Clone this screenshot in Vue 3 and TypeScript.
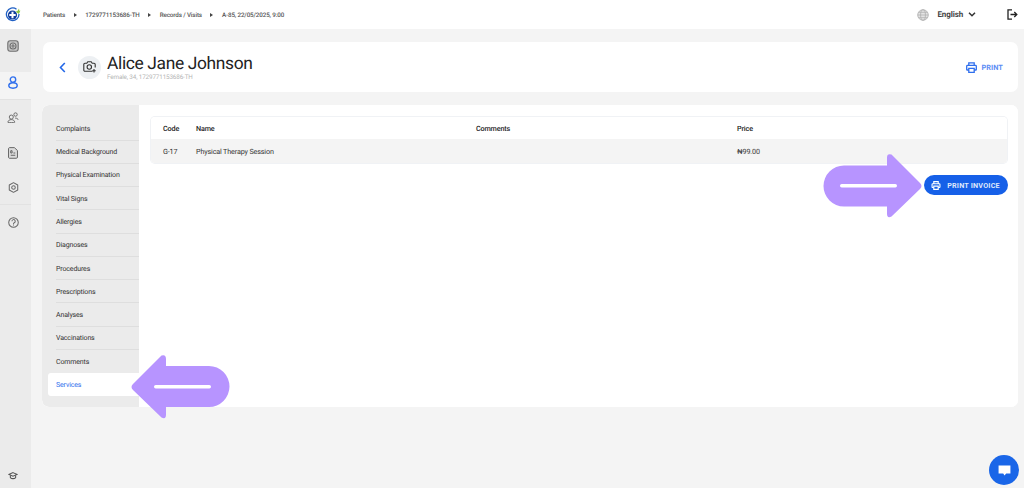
<script setup lang="ts">
const crumbs: string[] = ['Patients', '1729771153686-TH', 'Records / Visits', 'A-85, 22/05/2025, 9:00']
const menu: string[] = ['Complaints', 'Medical Background', 'Physical Examination', 'Vital Signs', 'Allergies', 'Diagnoses', 'Procedures', 'Prescriptions', 'Analyses', 'Vaccinations', 'Comments', 'Services']
</script>

<template>
  <div class="page">
    <header class="topbar">
      <svg class="logo" width="16" height="16" viewBox="0 0 16 16">
        <path d="M11.500 2.200A6.300 6.300 0 1 0 14 7" fill="none" stroke="#1f5fc4" stroke-width="1.300" />
        <circle cx="7.500" cy="8" r="4.600" fill="#123f9c" />
        <path d="M6.500 4.800h2v2.200h2.200v2H8.500v2.200h-2V9H4.300V7h2.200z" fill="#fff" />
        <path d="M11 5l1-1.500.4.800L14 1.500l.4 2.500 1-.5-1.500 3.500z" fill="#8cc63f" />
      </svg>
      <nav class="crumbs">
        <template v-for="(c, i) in crumbs" :key="c">
          <span>{{ c }}</span>
          <svg v-if="i < crumbs.length - 1" class="sep" width="3" height="4" viewBox="0 0 3 4"><path d="M0 0 3 2 0 4z" fill="#444" /></svg>
        </template>
      </nav>
      <div class="top-right">
        <svg width="12" height="12" viewBox="0 0 12 12" fill="none" stroke="#b0b0b0" stroke-width=".8">
          <circle cx="6" cy="6" r="5.300" fill="#e4e4e4" />
          <ellipse cx="6" cy="6" rx="2.400" ry="5.300" />
          <path d="M.7 6h10.600M1.500 3.300h9M1.500 8.700h9" />
        </svg>
        <span class="lang">English</span>
        <svg class="chev" width="8" height="5" viewBox="0 0 8 5" fill="none" stroke="#333" stroke-width="1.500"><path d="M1 .8 4 3.800 7 .8" /></svg>
        <svg class="logout" width="11" height="11" viewBox="0 0 11 11" fill="none" stroke="#222" stroke-width="1.300">
          <path d="M5 .9H1v9.200h4" />
          <path d="M3.500 5.500h6M7.300 3 9.800 5.500 7.300 8" />
        </svg>
      </div>
    </header>

    <div class="body">
      <aside class="rail">
        <div class="rail-top">
          <div class="rail-item r1">
            <svg width="12" height="12" viewBox="0 0 12 12" fill="none" stroke="#707070" stroke-width="1.100">
              <rect x=".8" y=".8" width="10.400" height="10.400" rx="2.400" fill="#c4c4c4" />
              <circle cx="6" cy="6" r="3" fill="#d8d8d8" />
              <circle cx="6" cy="6" r="1.100" />
            </svg>
          </div>
          <div class="rail-item active">
            <svg width="10" height="13" viewBox="0 0 10 13" fill="none" stroke="#2f6fed" stroke-width="1.400">
              <circle cx="5" cy="3.600" r="2.700" />
              <path d="M5 6.800c-2.500 0-4.200 1.300-4.200 2.800 0 1.500 1.700 2.600 4.200 2.600s4.200-1.100 4.200-2.600c0-1.500-1.700-2.800-4.200-2.800z" />
            </svg>
          </div>
          <div class="rail-item r3">
            <svg width="12" height="11" viewBox="0 0 14 13" fill="none" stroke="#666" stroke-width="1.100">
              <circle cx="5" cy="6" r="2.400" />
              <path d="M1 12.200c0-2 1.700-3.200 4-3.200s4 1.200 4 3.200c-1.200.5-6.800.5-8 0z" />
              <circle cx="10" cy="3" r="2" />
              <path d="M9.500 7.200c2 0 3.500.6 3.500 2" />
            </svg>
          </div>
          <div class="rail-item r4">
            <svg width="10" height="12" viewBox="0 0 11 13" fill="none" stroke="#666" stroke-width="1.100">
              <path d="M1.500.6h5.500l3.400 3.200v7.200a1.300 1.300 0 0 1-1.300 1.300H1.500A1.300 1.300 0 0 1 .6 11V1.800A1.300 1.300 0 0 1 1.500.6z" fill="#dcdcdc" />
              <path d="M3 4h1.500v2.500H3zM3 9h5M6 6.500h2" />
            </svg>
          </div>
          <div class="rail-item r5">
            <svg width="11" height="11" viewBox="0 0 13 13" fill="none" stroke="#666" stroke-width="1.200">
              <path d="M6.500.8 11.500 3.600v5.800L6.500 12.200 1.500 9.400V3.600z" stroke-linejoin="round" />
              <circle cx="6.500" cy="6.500" r="2.100" />
            </svg>
          </div>
          <div class="rail-item r6">
            <svg width="11" height="11" viewBox="0 0 12 12" fill="none" stroke="#666" stroke-width="1.100">
              <circle cx="6" cy="6" r="5.200" />
              <path d="M4.300 4.700a1.800 1.800 0 1 1 2.500 1.600c-.6.300-.8.600-.8 1.200M6 8.300v1" />
            </svg>
          </div>
        </div>
        <svg class="cap" width="10" height="8" viewBox="0 0 12 10" fill="none" stroke="#555" stroke-width="1.300">
          <path d="M6 .8 11.200 3 6 5.200.8 3z" />
          <path d="M2.700 4v3c1.500 1.700 5.100 1.700 6.600 0V4" />
        </svg>
      </aside>

      <main class="content">
        <section class="head-card">
          <svg class="back" width="7" height="11" viewBox="0 0 7 11" fill="none" stroke="#2468e8" stroke-width="1.600"><path d="M5.800 1 1.500 5.500 5.800 10" /></svg>
          <div class="avatar">
            <svg width="13" height="12" viewBox="0 0 13 12" fill="none" stroke="#333" stroke-width="1.100">
              <path d="M9.500 10.300H2A1.200 1.200 0 0 1 .8 9V3.500A1.200 1.200 0 0 1 2 2.300h1.800l1-1.500h3.400l1 1.500H11a1.200 1.200 0 0 1 1.200 1.200v3" />
              <circle cx="6.300" cy="6" r="2.200" />
              <path d="M11 8v3.500M9.300 9.800h3.400" />
            </svg>
          </div>
          <div class="who">
            <h1>Alice Jane Johnson</h1>
            <p>Female, 34, 1729771153686-TH</p>
          </div>
          <div class="head-print">
            <svg class="printer" width="11" height="11" viewBox="0 0 11 11" fill="none" stroke="#2f6fed" stroke-width="1.300">
              <path d="M2.800 3.400V.8h5.400v2.600M2.800 8H1.300a.6.6 0 0 1-.6-.6V4.200a.8.8 0 0 1 .8-.8h8a.8.8 0 0 1 .8.800v3.200a.6.6 0 0 1-.6.600H8.200" />
              <path d="M2.800 6.300h5.400v4H2.800z" />
            </svg>
            <span>PRINT</span>
          </div>
        </section>

        <section class="panel">
          <ul class="menu">
            <li v-for="m in menu" :key="m" :class="{ on: m === 'Services' }"><span>{{ m }}</span></li>
          </ul>
          <div class="detail">
            <div class="table">
              <div class="row thead">
                <span>Code</span><span>Name</span><span>Comments</span><span>Price</span>
              </div>
              <div class="row tbody">
                <span>G-17</span><span>Physical Therapy Session</span><span></span><span>₦99.00</span>
              </div>
            </div>
            <div class="actions">
              <button class="invoice" type="button">
                <svg width="10" height="9" viewBox="0 0 11 11" fill="none" stroke="#fff" stroke-width="1.400">
                  <path d="M2.800 3.400V.8h5.400v2.600M2.800 8H1.300a.6.6 0 0 1-.6-.6V4.200a.8.8 0 0 1 .8-.8h8a.8.8 0 0 1 .8.800v3.200a.6.6 0 0 1-.6.600H8.200" />
                  <path d="M2.800 6.300h5.400v4H2.800z" />
                </svg>
                PRINT INVOICE
              </button>
            </div>
          </div>
        </section>
      </main>
    </div>

    <svg class="arrow arrow-right" width="100" height="66" viewBox="0 0 100 66">
      <path d="M21 12.500H64V4.500Q64 0 68.500 1.500L97 30Q100 33 97 36L68.500 63.500Q64 66 64 60.500V53.500H21A20.500 20.500 0 0 1 21 12.500Z" fill="#b794ff" />
      <rect x="17" y="31" width="57" height="3.500" rx="1.700" fill="#fff" />
    </svg>
    <svg class="arrow arrow-left" width="100" height="66" viewBox="0 0 100 66">
      <path d="M78 12H35V5Q35 0 30.500 1.500L2 30Q-1 33 2 36L30.500 63.500Q35 66 35 60.500V53H78A20.500 20.500 0 0 0 78 12Z" fill="#b794ff" />
      <rect x="23" y="31" width="57" height="3.500" rx="1.700" fill="#fff" />
    </svg>

    <div class="chat">
      <svg width="13" height="11" viewBox="0 0 15 13"><path d="M.5.500h14v9.500H9.500L7.500 12.500 6 10H.5z" fill="#fff" /></svg>
    </div>
  </div>
</template>

<style>
html, body { margin: 0; padding: 0; }
</style>

<style scoped>
.page { position: relative; width: 1024px; height: 488px; overflow: hidden; background: #f4f4f4; font-family: Roboto, "Liberation Sans", sans-serif; color: #333; display: flex; flex-direction: column; text-rendering: geometricPrecision; }
.topbar { height: 29px; background: #fff; display: flex; align-items: center; flex: none; padding: 0 6px 0 5px; box-sizing: border-box; font-size: 6.250px; font-weight: 500; letter-spacing: -.02em; }
.logo { flex: none; }
.crumbs { display: flex; align-items: center; margin-left: 22px; gap: 8.500px; color: #555; }
.top-right { margin-left: auto; display: flex; align-items: center; }
.lang { margin-left: 8px; font-size: 8px; font-weight: 700; color: #444; }
.chev { margin-left: 5px; }
.logout { margin-left: 31px; }
.body { flex: 1; display: flex; min-height: 0; }
.rail { width: 31px; background: #ebebeb; flex: none; display: flex; flex-direction: column; justify-content: space-between; padding-bottom: 8px; box-sizing: border-box; }
.rail-top { display: flex; flex-direction: column; }
.rail-item { display: flex; align-items: center; justify-content: center; padding-right: 5px; box-sizing: border-box; }
.r1 { height: 43px; padding-bottom: 9px; }
.active { padding-bottom: 6px; background: #f4f4f4; border-bottom: 1px solid #e2e2e2; box-sizing: content-box; height: 21px; }
.r3 { height: 35px; }
.r4 { height: 35px; }
.r5 { height: 35px; border-bottom: 1px solid #e2e2e2; }
.r6 { height: 36px; padding-bottom: 2px; }
.cap { align-self: flex-start; margin-left: 8px; }
.content { flex: 1; padding: 13px 6px 0 11px; display: flex; flex-direction: column; gap: 13px; min-width: 0; }
.head-card { height: 50px; margin-left: 1px; background: #fff; border-radius: 7px; display: flex; align-items: center; padding: 0 15px 0 16px; box-sizing: border-box; }
.back { flex: none; }
.avatar { width: 23px; height: 23px; border-radius: 50%; background: #edf0f3; margin-left: 12px; display: flex; align-items: center; justify-content: center; flex: none; }
.who { margin-left: 6px; margin-top: 1px; }
.who h1 { margin: 0; font-size: 17.400px; letter-spacing: -.02em; line-height: 21px; font-weight: 400; color: #222; }
.who p { margin: -1px 0 0; font-size: 6.300px; letter-spacing: -.02em; line-height: 7px; color: #b5b5b5; }
.head-print { margin-left: auto; display: flex; align-items: center; gap: 4px; color: #5b8df5; font-size: 7.300px; font-weight: 700; letter-spacing: .1px; }
.panel { height: 302px; display: flex; border-radius: 7px; background: #fff; overflow: hidden; }
.menu { list-style: none; margin: 0; padding: 12.300px 0 0 6px; width: 97px; box-sizing: border-box; background: #ebebeb; flex: none; border-radius: 7px 0 0 7px; font-size: 7px; letter-spacing: -.02em; font-weight: 400; color: #333; }
.menu li { height: 23.270px; box-sizing: border-box; padding-left: 8px; display: flex; align-items: center; position: relative; }
.menu li:not(.on):not(:nth-last-child(2))::after { content: ""; position: absolute; left: 8px; right: 0; bottom: 0; height: 1px; background: #dedede; }
.menu li.on { background: #fff; color: #2f6fed; border-radius: 3px 0 0 3px; }
.detail { flex: 1; padding: 12px 11px 0 12px; min-width: 0; border-radius: 7px 0 0 0; background: #fff; }
.table { border-radius: 4px; overflow: hidden; box-shadow: 0 0 0 1px #f0f2f5; font-size: 7.200px; letter-spacing: -.02em; }
.row { display: grid; grid-template-columns: 33px 280px 261px 1fr; padding: 1px 0 0 12px; box-sizing: border-box; align-items: center; }
.thead { height: 22px; background: #fff; font-weight: 500; color: #222; }
.tbody { height: 24px; background: #f4f4f4; font-weight: 400; color: #333; }
.actions { display: flex; justify-content: flex-end; margin: 12px -.5px 0 0; }
.invoice { width: 84px; height: 20px; border: 0; border-radius: 10px; background: #1660e8; color: #dfe8fb; font: 700 7.200px Roboto, "Liberation Sans", sans-serif; letter-spacing: .2px; display: flex; align-items: center; justify-content: center; gap: 6px; padding: 0; white-space: nowrap; }
.arrow { position: absolute; }
.arrow-right { left: 823px; top: 152.500px; }
.arrow-left { left: 130.500px; top: 354px; }
.chat { position: absolute; left: 989px; top: 455px; width: 30px; height: 30px; border-radius: 50%; background: #1a66e8; display: flex; align-items: center; justify-content: center; }
</style>
